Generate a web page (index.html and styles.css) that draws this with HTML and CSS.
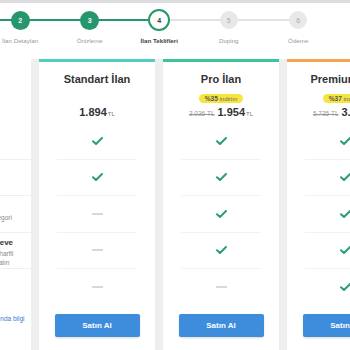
FILE: index.html
```html
<!DOCTYPE html>
<html lang="tr">
<head>
    <meta charset="UTF-8">
    <meta name="viewport" content="width=device-width, initial-scale=1.0">
    <title>İlan Teklifleri</title>
    <link rel="stylesheet" href="styles.css">
</head>
<body>
    <div class="topbar"></div>
    <div class="page">
        <ol class="steps">
            <li class="step done"><span class="dot-box"><span class="dot">1</span></span><span class="label">Kategori</span></li>
            <li class="step done"><span class="dot-box"><span class="dot">2</span></span><span class="label">İlan Detayları</span></li>
            <li class="step done"><span class="dot-box"><span class="dot">3</span></span><span class="label">Önizleme</span></li>
            <li class="step active"><span class="dot-box"><span class="dot">4</span></span><span class="label">İlan Teklifleri</span></li>
            <li class="step todo"><span class="dot-box"><span class="dot">5</span></span><span class="label">Doping</span></li>
            <li class="step todo"><span class="dot-box"><span class="dot">6</span></span><span class="label">Ödeme</span></li>
        </ol>

        <div class="plans">
            <div class="features">
                <div class="feat-head"></div>
                <div class="feat">
                    <span class="feat-title">Kategori Vitrini</span>
                    <span class="feat-desc">İlanınız kategori</span>
                    <span class="feat-desc">vitrininde yer alır.</span>
                </div>
                <div class="feat">
                    <span class="feat-title">Acil Acil</span>
                    <span class="feat-desc">Acil ilanlar</span>
                    <span class="feat-desc">listesinde görünür.</span>
                </div>
                <div class="feat">
                    <span class="feat-title">Üst Sıradayım</span>
                    <span class="feat-desc">İlanınızın görüneceği ana kategori</span>
                    <span class="feat-desc">sayfasında öne çıkar.</span>
                </div>
                <div class="feat">
                    <span class="feat-title">Kalın Yazı ve Sarı Çerçeve</span>
                    <span class="feat-desc">İlanınızı kalın renkli ve büyük harfli</span>
                    <span class="feat-desc">yazıyla ve daha fazla teklifler alın</span>
                </div>
                <div class="feat">
                    <span class="feat-title">Anasayfa Vitrini</span>
                    <span class="feat-desc">Tüm ziyaretçiler</span>
                    <span class="feat-desc">ilanınızı görür.</span>
                </div>
                <a class="info-link" href="#">Tüm doping seçenekleri hakkında bilgi</a>
            </div>

            <div class="plan standart">
                <div class="plan-head">
                    <h2 class="plan-name">Standart İlan</h2>
                    <div class="badge-row"></div>
                    <div class="price"><span class="amount">1.894</span><span class="cur">TL</span></div>
                </div>
                <ul class="rows">
                    <li class="row"><span class="yes"></span></li>
                    <li class="row"><span class="yes"></span></li>
                    <li class="row"><span class="no"></span></li>
                    <li class="row"><span class="no"></span></li>
                    <li class="row"><span class="no"></span></li>
                </ul>
                <button class="buy">Satın Al</button>
            </div>

            <div class="plan pro">
                <div class="plan-head">
                    <h2 class="plan-name">Pro İlan</h2>
                    <div class="badge-row"><span class="badge"><b>%35</b> indirim</span></div>
                    <div class="price"><span class="old">3.036 TL</span><span class="amount">1.954</span><span class="cur">TL</span></div>
                </div>
                <ul class="rows">
                    <li class="row"><span class="yes"></span></li>
                    <li class="row"><span class="yes"></span></li>
                    <li class="row"><span class="yes"></span></li>
                    <li class="row"><span class="yes"></span></li>
                    <li class="row"><span class="no"></span></li>
                </ul>
                <button class="buy">Satın Al</button>
            </div>

            <div class="plan premium">
                <div class="plan-head">
                    <h2 class="plan-name">Premium İlan</h2>
                    <div class="badge-row"><span class="badge"><b>%37</b> indirim</span></div>
                    <div class="price"><span class="old">5.735 TL</span><span class="amount">3.614</span><span class="cur">TL</span></div>
                </div>
                <ul class="rows">
                    <li class="row"><span class="yes"></span></li>
                    <li class="row"><span class="yes"></span></li>
                    <li class="row"><span class="yes"></span></li>
                    <li class="row"><span class="yes"></span></li>
                    <li class="row"><span class="yes"></span></li>
                </ul>
                <button class="buy">Satın Al</button>
            </div>
        </div>
    </div>

    <script>
        // draw the check marks once instead of repeating the svg in every row
        const check = '<svg width="11" height="8" viewBox="0 0 11 8"><path d="M1 4.2 L4 7 L10 1" fill="none" stroke="#2c9e72" stroke-width="2" stroke-linecap="round" stroke-linejoin="round"/></svg>';
        document.querySelectorAll('.yes').forEach(function(el) {
            el.innerHTML = check;
        });
    </script>
</body>
</html>
```

FILE: styles.css
```css
body {
    margin: 0;
    overflow: hidden;
    background-color: #fff;
    font-family: "Liberation Sans", Arial, sans-serif;
}
.topbar {
    height: 3px;
    background-color: #dcdce1;
}
.page {
    margin-left: -100px;
    width: 640px;
}

/* stepper */
.steps {
    list-style: none;
    display: flex;
    margin: 6px 0 0;
    padding: 0 0 0 16px;
}
.step {
    position: relative;
    flex: none;
    width: 69.5px;
    display: flex;
    flex-direction: column;
    align-items: center;
}
.step::before {
    content: "";
    position: absolute;
    top: 10px;
    left: -50%;
    width: 100%;
    height: 2px;
    background-color: #e2e2e2;
}
.step.done::before,
.step.active::before {
    background-color: #26966d;
}
.dot-box {
    height: 22px;
    display: flex;
    align-items: center;
}
.dot {
    position: relative;
    z-index: 1;
    width: 19px;
    height: 19px;
    border-radius: 50%;
    background-color: #26966d;
    color: #fff;
    font-size: 7px;
    font-weight: bold;
    display: flex;
    align-items: center;
    justify-content: center;
}
.active .dot {
    width: 18px;
    height: 18px;
    border: 2px solid #26966d;
    background-color: #fff;
    color: #333;
}
.todo .dot {
    width: 18px;
    height: 18px;
    background-color: #e8e8e8;
    color: #aaa;
    font-weight: normal;
}
.label {
    margin-top: 6px;
    font-size: 6.2px;
    line-height: 8px;
    color: #999;
    white-space: nowrap;
}
.active .label {
    color: #444;
    font-weight: bold;
}

/* plans table */
.plans {
    display: flex;
    gap: 8px;
    margin-top: 14px;
    padding: 0 0 20px;
    background-color: #efefef;
}
.features {
    flex: none;
    width: 131px;
    background-color: #fff;
}
.feat-head {
    height: 64px;
}
.feat {
    height: 36.5px;
    box-sizing: border-box;
    padding: 4px 0 0 14px;
    border-bottom: 1px solid #efefef;
    display: flex;
    flex-direction: column;
    justify-content: center;
    white-space: nowrap;
}
.feat:last-of-type {
    border-bottom: none;
}
.feat-title {
    font-size: 8px;
    line-height: 11px;
    font-weight: bold;
    color: #333;
    margin-bottom: 1px;
}
.feat-desc {
    font-size: 6.5px;
    line-height: 9px;
    color: #888;
}
.info-link {
    display: block;
    margin-top: 8px;
    padding-left: 14px;
    font-size: 6.5px;
    line-height: 9px;
    color: #3b7dd8;
    text-decoration: none;
    white-space: nowrap;
}

.plan {
    flex: none;
    width: 116px;
    background-color: #fff;
    border-top: 3px solid #52cdc5;
    text-align: center;
    box-shadow: 0 1px 2px rgba(0,0,0,0.04);
}
.plan.pro {
    border-top-color: #3cc59b;
}
.plan.premium {
    border-top-color: #f5a64c;
}
.plan-head {
    padding: 10px 0 5px;
}
.plan-name {
    margin: 0;
    font-size: 11px;
    line-height: 14px;
    color: #333;
    white-space: nowrap;
}
.badge-row {
    margin-top: 8px;
    height: 9px;
    display: flex;
    justify-content: center;
}
.badge {
    padding: 0 6px;
    border-radius: 5px;
    background-color: #f6e53c;
    font-size: 6px;
    line-height: 9px;
    color: #666;
    white-space: nowrap;
}
.badge b {
    font-size: 6.5px;
    color: #555;
}
.price {
    margin-top: 3px;
    height: 12px;
    display: flex;
    justify-content: center;
    align-items: baseline;
    line-height: 12px;
    white-space: nowrap;
}
.old {
    margin-right: 3px;
    font-size: 6.5px;
    color: #999;
    text-decoration: line-through;
}
.amount {
    font-size: 11px;
    font-weight: bold;
    color: #333;
}
.cur {
    margin-left: 1px;
    font-size: 6px;
    color: #777;
}
.rows {
    list-style: none;
    margin: 0;
    padding: 0;
}
.row {
    height: 36.5px;
    box-sizing: border-box;
    margin: 0 18px;
    border-bottom: 1px solid #f2f2f2;
    display: flex;
    align-items: center;
    justify-content: center;
}
.row:last-child {
    border-bottom: none;
}
.yes svg {
    display: block;
}
.no {
    display: block;
    width: 11px;
    height: 2px;
    background-color: #d8d8d8;
}
.buy {
    display: block;
    width: 85px;
    height: 23px;
    margin: 8.5px auto 14px;
    border: none;
    border-radius: 2px;
    background-color: #3e8cdc;
    color: #fff;
    font-family: "Liberation Sans", Arial, sans-serif;
    font-size: 8px;
    font-weight: bold;
    box-shadow: 0 1px 2px rgba(0,0,0,0.15);
    cursor: pointer;
}
```
